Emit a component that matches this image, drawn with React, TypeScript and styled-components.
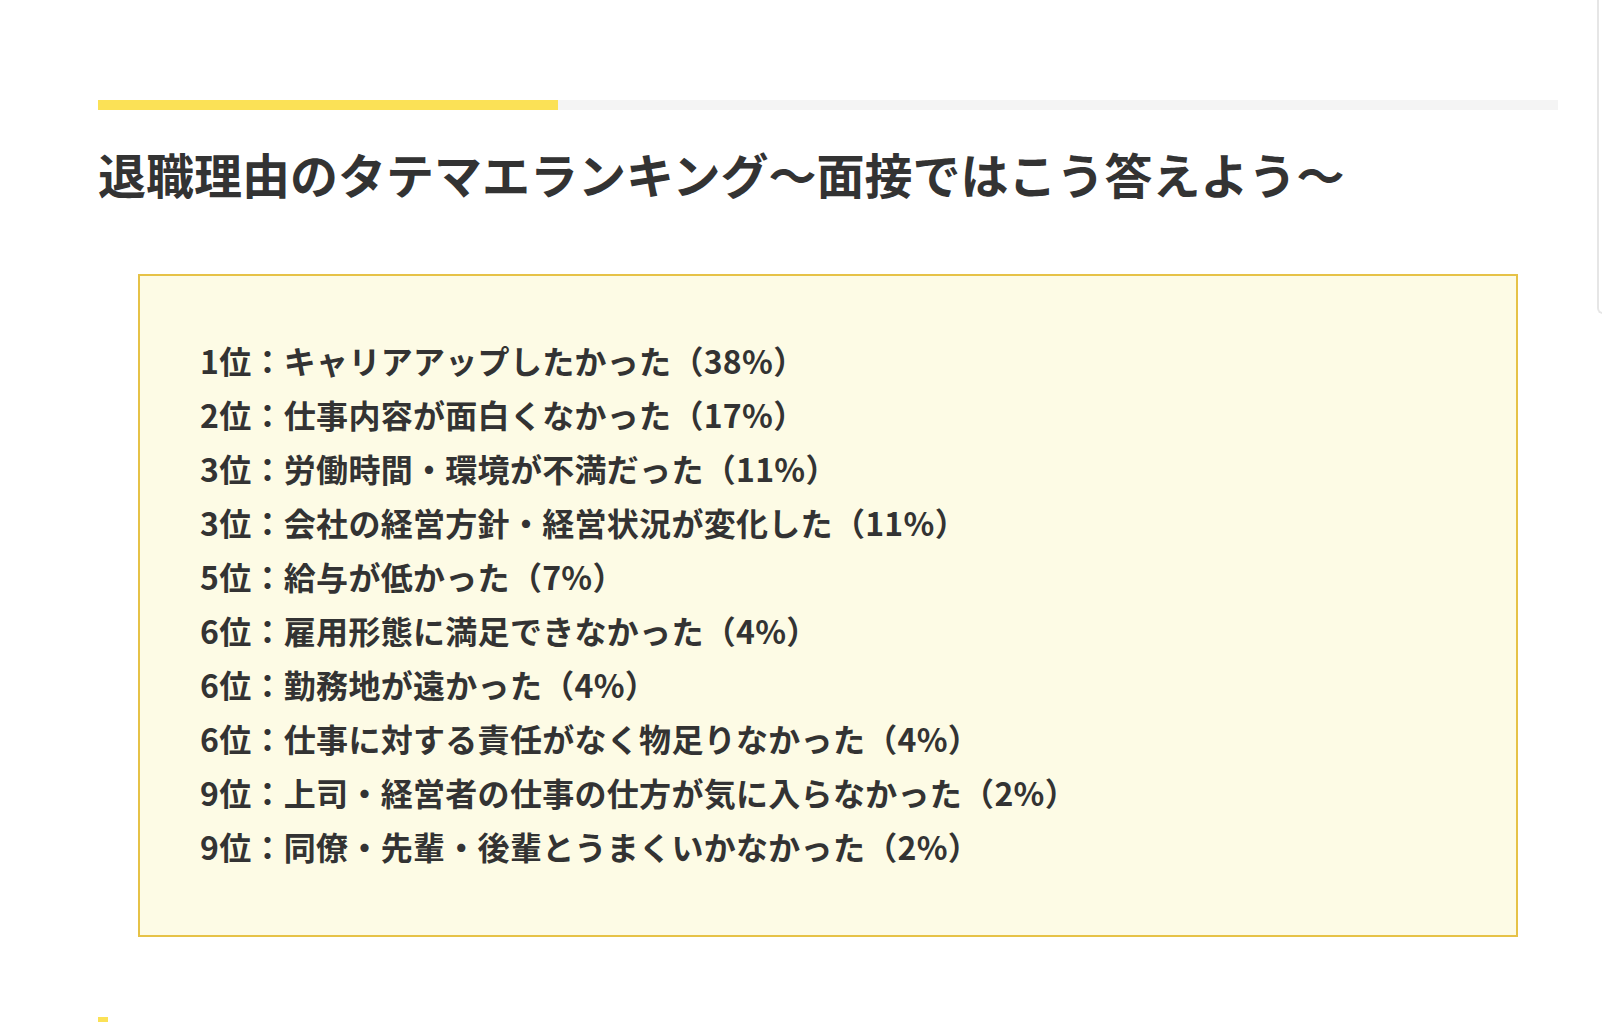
import React from 'react';
import styled, { createGlobalStyle } from 'styled-components';

const GlobalStyle = createGlobalStyle`
  html, body {
    margin: 0;
    padding: 0;
    background: #ffffff;
    overflow: hidden;
  }
  body {
    font-family: "Noto Sans CJK JP", "Noto Sans", sans-serif;
    color: #333333;
  }
`;

const Page = styled.div`
  width: 1602px;
  height: 1022px;
  overflow: hidden;
  position: relative;
`;

const Article = styled.article`
  width: 1460px;
  padding: 100px 0 0 98px;
`;

const ProgressBar = styled.div`
  height: 10px;
  background: #f4f4f4;
`;

const ProgressFill = styled.div<{ $width: number }>`
  height: 100%;
  width: ${(p) => p.$width}px;
  background: #fbe156;
`;

const Heading = styled.h2`
  margin: 30px 0 0;
  font-size: 48px;
  line-height: 67px;
  font-weight: 700;
  color: #333333;
  white-space: nowrap;
`;

const RankingBox = styled.div`
  margin: 67px 0 0 40px;
  box-sizing: content-box;
  padding: 57px 0 62px 60px;
  width: 1316px;
  background: #fdfbe5;
  border: 2px solid #e6c247;
`;

const RankItem = styled.p`
  margin: 0;
  font-size: 32px;
  line-height: 54px;
  letter-spacing: 0.3px;
  font-weight: 700;
  color: #333333;
  white-space: nowrap;
`;

const NextMarker = styled.div`
  margin-top: 80px;
  width: 10px;
  height: 10px;
  background: #fbe156;
`;

// side panel peeking in from the right edge
const SidePanel = styled.div`
  position: absolute;
  top: -10px;
  left: 1597px;
  width: 40px;
  height: 320px;
  border: 2px solid #e6e6e6;
  border-right: none;
  border-radius: 0 0 0 6px;
  background: #ffffff;
`;

const ranks = [
  '1位：キャリアアップしたかった（38%）',
  '2位：仕事内容が面白くなかった（17%）',
  '3位：労働時間・環境が不満だった（11%）',
  '3位：会社の経営方針・経営状況が変化した（11%）',
  '5位：給与が低かった（7%）',
  '6位：雇用形態に満足できなかった（4%）',
  '6位：勤務地が遠かった（4%）',
  '6位：仕事に対する責任がなく物足りなかった（4%）',
  '9位：上司・経営者の仕事の仕方が気に入らなかった（2%）',
  '9位：同僚・先輩・後輩とうまくいかなかった（2%）',
];

const App: React.FC = () => {
  return (
    <Page>
      <GlobalStyle />
      <Article>
        <ProgressBar>
          <ProgressFill $width={460} />
        </ProgressBar>
        <Heading>退職理由のタテマエランキング〜面接ではこう答えよう〜</Heading>
        <RankingBox>
          {ranks.map((r, i) => (
            <RankItem key={i}>{r}</RankItem>
          ))}
        </RankingBox>
        <NextMarker />
      </Article>
      <SidePanel />
    </Page>
  );
};

export default App;
